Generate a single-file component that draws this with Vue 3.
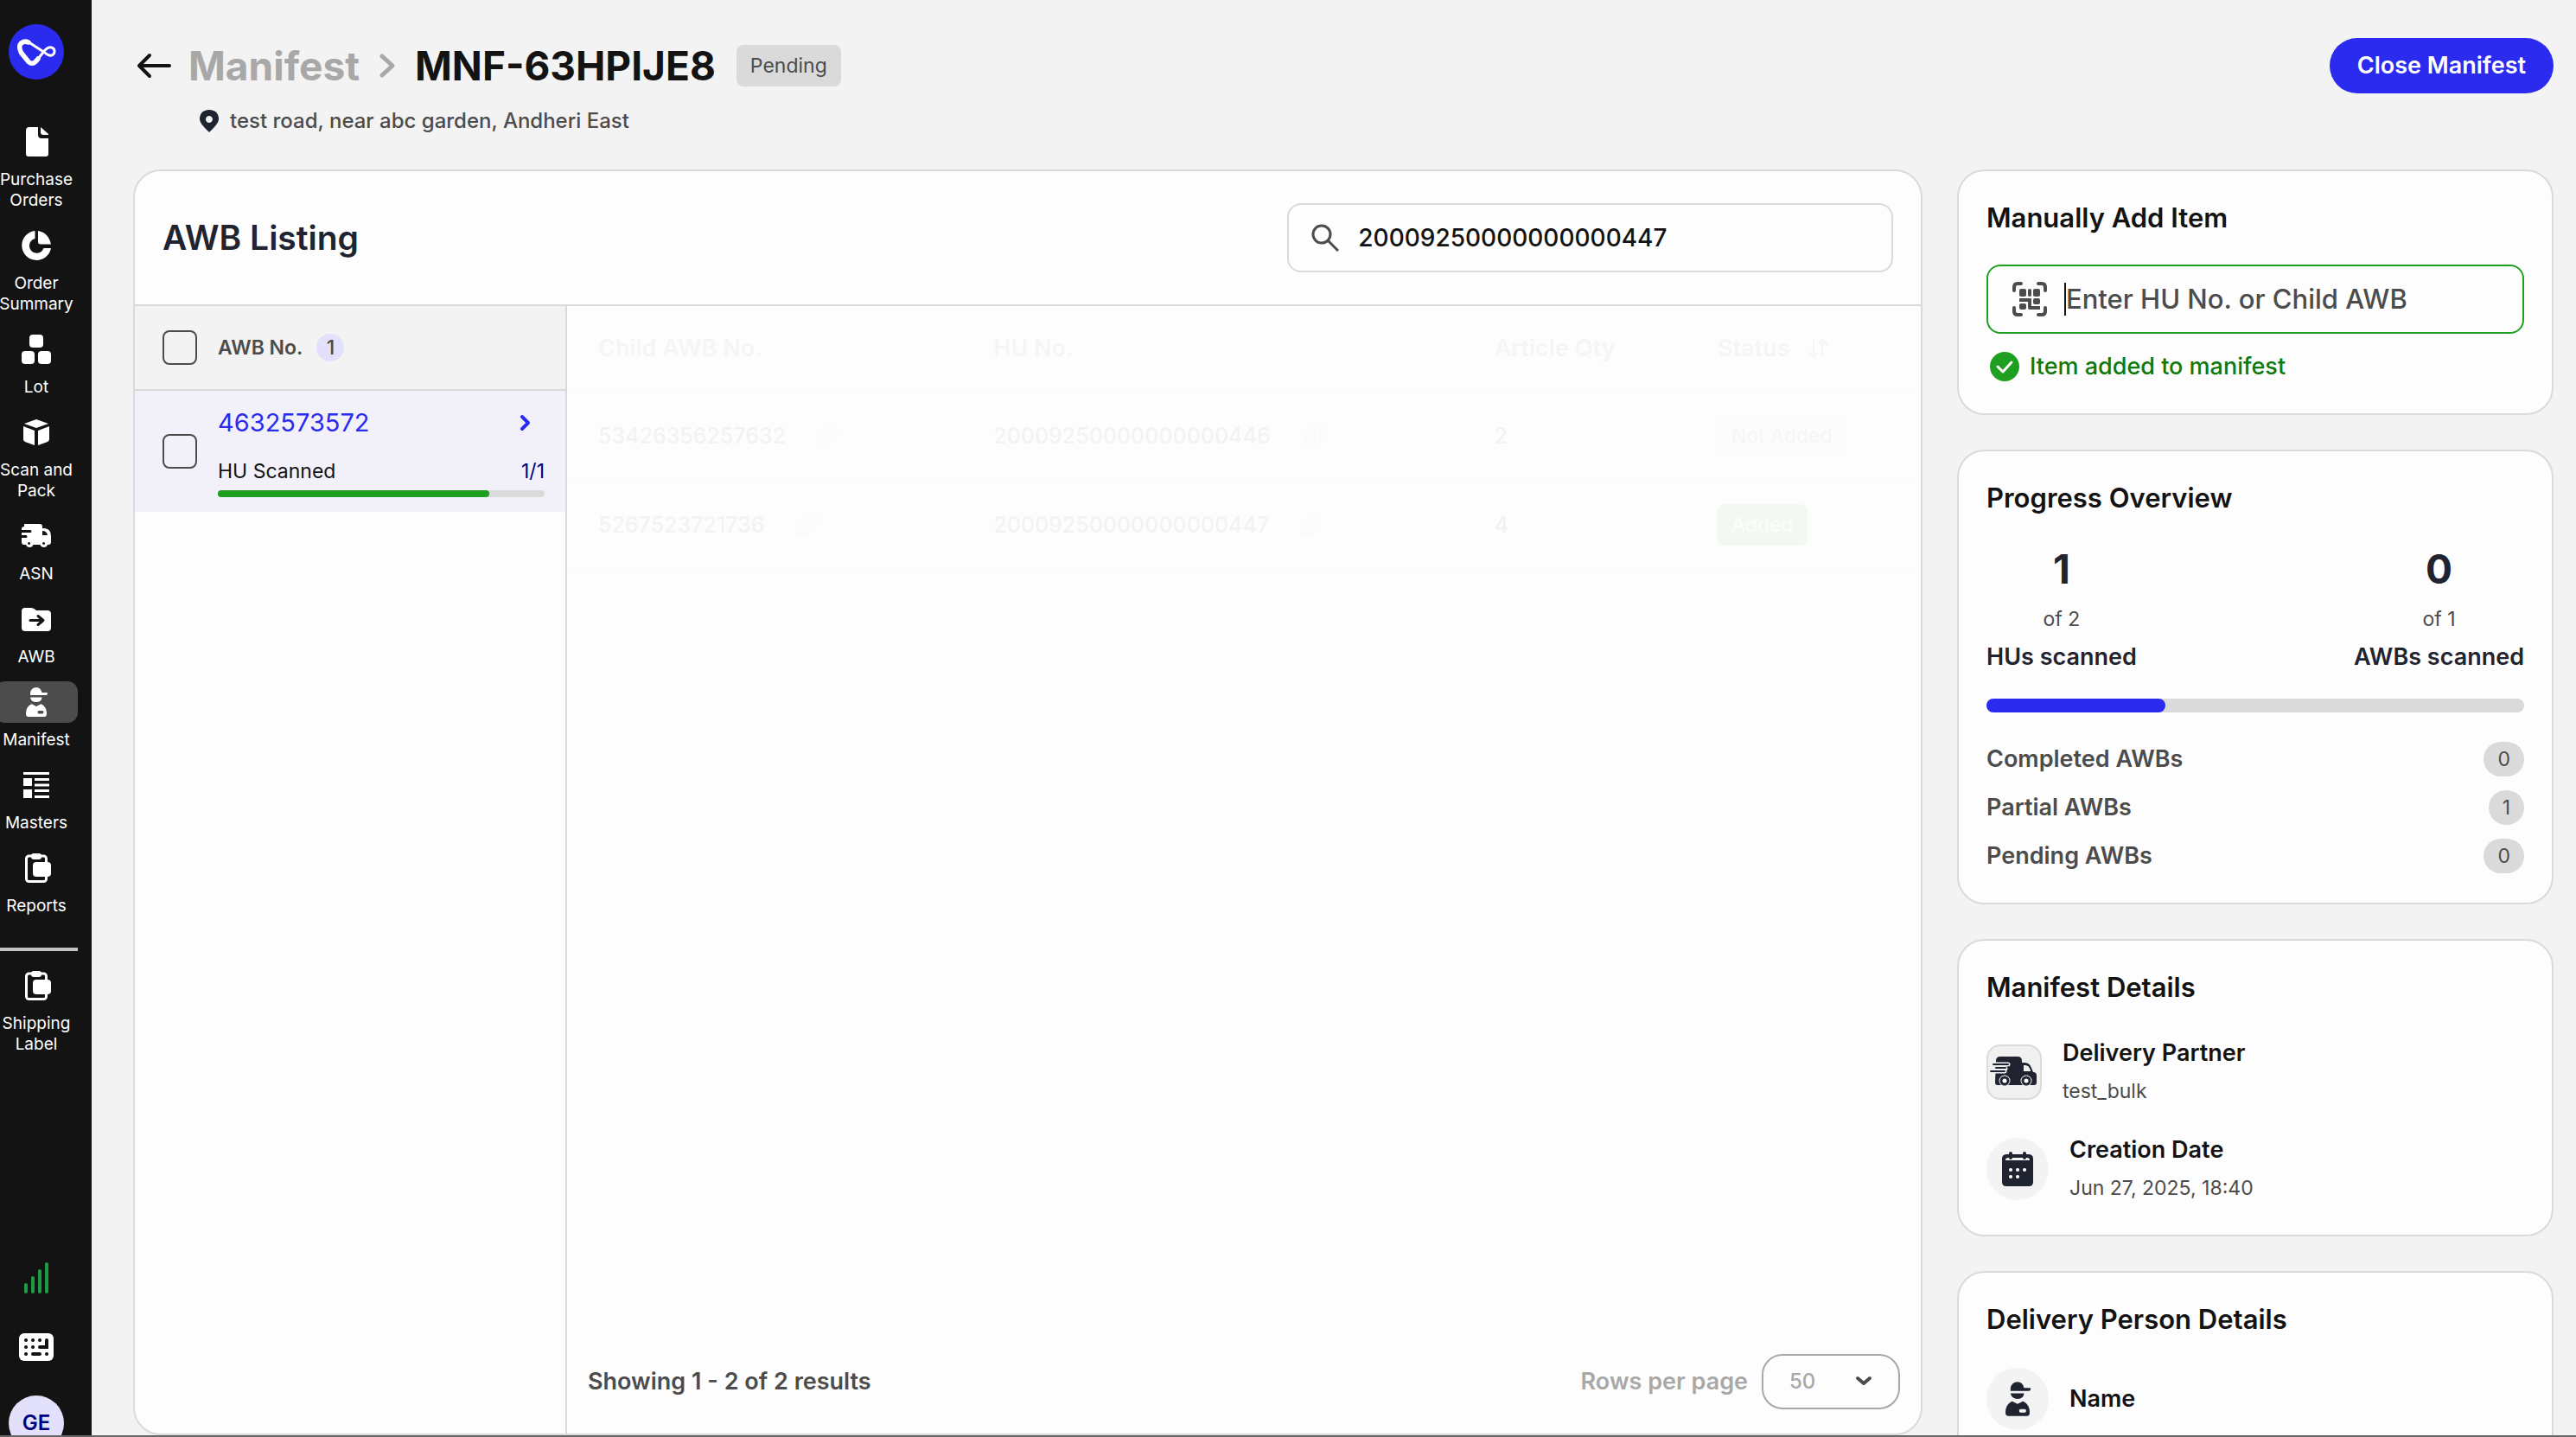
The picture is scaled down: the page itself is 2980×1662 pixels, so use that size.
<script setup>
import { ref } from 'vue'

const icons = {
  document:
    '<path d="M16 7h10v9q0 4 4 4h8v18q0 3-3 3H15q-3 0-3-3V11q0-4 4-4z"/><path d="M29 7l9 8v1h-6q-3 0-3-3z"/>',
  pie:
    '<path d="M22.500 7A17 17 0 1 0 41 27H32.500A8.500 8.500 0 1 1 22.500 16z"/><path d="M26 7Q38 9 41 22.500H29q-3 0-3-3z"/>',
  blocks:
    '<rect x="16" y="7" width="16" height="15" rx="4"/><rect x="7" y="26" width="15" height="15" rx="4"/><rect x="26" y="26" width="15" height="15" rx="4"/>',
  box:
    '<path d="M24 9l14 5-14 5-14-5z"/><path d="M9 17l13 5v17l-11-4q-2-1-2-3z"/><path d="M39 17l-13 5v17l11-4q2-1 2-3z"/>',
  truck:
    '<path fill-rule="evenodd" d="M10 10h18q3 0 3 3v2h3q7 1 7 9v7q0 3-3 3h-1a4.500 4.500 0 0 1-8.500 0h-8a4.500 4.500 0 0 1-8.500 0H10q-3 0-3-3v-5h5a1.500 1.500 0 0 0 0-3H7v-3h10a1.500 1.500 0 0 0 0-3H7v-1q0-3 3-3zM31 18v5h6q-1-5-6-5zM15.500 31a1.500 1.500 0 1 0 .1 0zM32.500 31a1.500 1.500 0 1 0 .1 0z"/>',
  folder:
    '<path fill-rule="evenodd" d="M11 11h7q3 0 6 3h13q4 0 4 4v16q0 4-4 4H11q-4 0-4-4V15q0-4 4-4z"/><path d="M17 25.500h14M26 20.500l6 5-6 5" fill="none" stroke="#131313" stroke-width="3" stroke-linecap="round" stroke-linejoin="round"/>',
  person:
    '<path d="M17 16V13.500Q18 7 24 7q5 0 6.500 6H36q1.500 0 1 1.500t-2 1.500z"/><path d="M17 18.500h13.500Q30 24 24 24t-7-5.500z"/><path fill-rule="evenodd" d="M18 26.500q1-.5 2 .5l4 2 4-2q1-1 2-.5 6 3 6 11 0 3.500-3 3.500H15q-3 0-3-3.500 0-8 6-11zM27 34q-1.500 0-1.500 1.800t1.500 1.700h4q1.500 0 1.500-1.700T31 34z"/>',
  list:
    '<path d="M9 9h30v3H9zM9 16h10v9H9zM9 29h10v10H9zM22 16h17v3H22zM22 22.500h17v3H22zM22 29h17v3H22zM22 36h17v3H22z"/>',
  wallet:
    '<rect x="12.500" y="10" width="23" height="29.500" rx="3" fill="none" stroke="currentColor" stroke-width="3"/><rect x="18" y="7" width="12" height="7" rx="3"/><rect x="20" y="17" width="21" height="17" rx="4"/>',
}

const navItems = [
  { label: 'Purchase Orders', icon: 'document' },
  { label: 'Order Summary', icon: 'pie' },
  { label: 'Lot', icon: 'blocks' },
  { label: 'Scan and Pack', icon: 'box' },
  { label: 'ASN', icon: 'truck' },
  { label: 'AWB', icon: 'folder' },
  { label: 'Manifest', icon: 'person', active: true },
  { label: 'Masters', icon: 'list' },
  { label: 'Reports', icon: 'wallet' },
]

const search = ref('20009250000000000447')
const itemCode = ref('')
const rowsPerPage = ref('50')

const rows = [
  { child: '53426356257632', hu: '20009250000000000446', qty: 2, status: 'Not Added' },
  { child: '5267523721736', hu: '20009250000000000447', qty: 4, status: 'Added' },
]

const scanned = { awb: 83, manifest: 33.3 }

const counts = [
  { label: 'Completed AWBs', value: 0 },
  { label: 'Partial AWBs', value: 1 },
  { label: 'Pending AWBs', value: 0 },
]
</script>

<template>
  <div class="app">
    <nav class="sidebar" aria-label="Main">
      <a href="#" class="logo" aria-label="Home">
        <svg viewBox="0 0 64 64" fill="none" stroke="#fff" stroke-linecap="round" stroke-linejoin="round">
          <path d="M34 40L31 43.500Q27 47 23 43.500L14.500 33Q10.500 25 15 21.500Q18.500 19 23 21" stroke-width="5.500" />
          <path d="M22 20L42 33Q48 38.500 52 34.500Q54.500 30 51 27.500Q46.500 25 42 30L34 40" stroke-width="3" />
        </svg>
      </a>
      <ul class="nav-list">
        <li v-for="item in navItems" :key="item.label">
          <a href="#" class="nav-item" :class="{ active: item.active }">
            <span class="nav-icon"><svg viewBox="0 0 48 48" fill="currentColor" v-html="icons[item.icon]"></svg></span>
            <span class="nav-label">{{ item.label }}</span>
          </a>
        </li>
      </ul>
      <hr class="nav-divider" />
      <a href="#" class="nav-item">
        <span class="nav-icon"><svg viewBox="0 0 48 48" fill="currentColor" v-html="icons.wallet"></svg></span>
        <span class="nav-label">Shipping Label</span>
      </a>
      <div class="nav-bottom">
        <svg class="signal" viewBox="0 0 30 36" fill="none" stroke="#1b9c43" stroke-width="4" stroke-linecap="round">
          <path d="M3 26v8M11 18v16M19 10v24M27 2v32" />
        </svg>
        <button class="plain" aria-label="Keyboard shortcuts">
          <svg class="keyboard" viewBox="0 0 40 32">
            <rect width="40" height="32" rx="6" fill="#fff" />
            <g stroke="#131313" stroke-width="4" stroke-linecap="round" fill="none">
              <path d="M8 8h.1M16 8h.1M24 8h.1M8 16h.1M16 16h.1M8 24h.1M32 24h.1M16 24h8M32 8v8h-8" />
            </g>
          </svg>
        </button>
        <button class="avatar">GE</button>
      </div>
    </nav>

    <div class="page">
      <header class="topbar">
        <div>
          <div class="crumbs">
            <a href="#" class="back" aria-label="Back">
              <svg viewBox="0 0 40 32" fill="none" stroke="#131313" stroke-width="4" stroke-linecap="round" stroke-linejoin="round">
                <path d="M38 16H3M15 4L3 16l12 12" />
              </svg>
            </a>
            <a href="#" class="crumb">Manifest</a>
            <svg class="crumb-sep" viewBox="0 0 20 28" fill="none" stroke="#a8a8a8" stroke-width="5" stroke-linecap="round" stroke-linejoin="round">
              <path d="M4 3l12 11L4 25" />
            </svg>
            <h1>MNF-63HPIJE8</h1>
            <span class="tag">Pending</span>
          </div>
          <p class="address">
            <svg viewBox="0 0 24 28" fill="#1f2430">
              <path fill-rule="evenodd" d="M12 1Q1 1.500 1 12q0 5 11 15 11-10 11-15Q23 1.500 12 1zM12 8a4 4 0 1 1-.1 0z" />
            </svg>
            test road, near abc garden, Andheri East
          </p>
        </div>
        <button class="primary">Close Manifest</button>
      </header>

      <div class="columns">
        <main class="panel">
          <div class="panel-head">
            <h2>AWB Listing</h2>
            <label class="search">
              <svg viewBox="0 0 32 32" fill="none" stroke="#4c4c4c" stroke-width="3">
                <circle cx="12" cy="12" r="10" />
                <path d="M19 19l12 12" />
              </svg>
              <input v-model="search" type="text" aria-label="Search AWB" />
            </label>
          </div>
          <div class="panel-body">
            <section class="awb-col">
              <div class="awb-head">
                <input id="all" type="checkbox" class="check" />
                <label for="all">AWB No.</label>
                <span class="count">1</span>
              </div>
              <div class="awb-row">
                <input type="checkbox" class="check" aria-label="Select 4632573572" />
                <div class="awb-info">
                  <div class="between">
                    <a href="#" class="awb-no">4632573572</a>
                    <svg class="awb-go" viewBox="0 0 16 20" fill="none" stroke="#2b2bef" stroke-width="4" stroke-linecap="round" stroke-linejoin="round">
                      <path d="M4 3l7 7-7 7" />
                    </svg>
                  </div>
                  <div class="between scanned">
                    <span>HU Scanned</span>
                    <span class="ratio">1/1</span>
                  </div>
                  <div class="bar thin"><div class="fill green" :style="{ width: scanned.awb + '%' }"></div></div>
                </div>
              </div>
            </section>

            <section class="hu-col">
              <table>
                <colgroup>
                  <col class="c-child" /><col class="c-hu" /><col class="c-qty" /><col />
                </colgroup>
                <thead>
                  <tr>
                    <th>Child AWB No.</th>
                    <th>HU No.</th>
                    <th>Article Qty</th>
                    <th>
                      <span class="cell">Status
                        <svg class="sort" viewBox="0 0 24 24" fill="none" stroke="currentColor" stroke-width="2">
                          <path d="M7 2v20M1 16l6 6 4-5M17 22V2M13 7l4-5 6 6" />
                        </svg>
                      </span>
                    </th>
                  </tr>
                </thead>
                <tbody>
                  <tr v-for="row in rows" :key="row.child">
                    <td><span class="cell">{{ row.child }}<svg class="copy" viewBox="0 0 32 32" fill="#9a9a9a"><path d="M4 10h16v20H4z" opacity=".4" /><path d="M10 2h20v20h-6V6H10z" opacity=".2" /></svg></span></td>
                    <td><span class="cell">{{ row.hu }}<svg class="copy" viewBox="0 0 32 32" fill="#9a9a9a"><path d="M4 10h16v20H4z" opacity=".4" /><path d="M10 2h20v20h-6V6H10z" opacity=".2" /></svg></span></td>
                    <td>{{ row.qty }}</td>
                    <td><span class="tag" :class="{ added: row.status === 'Added' }">{{ row.status }}</span></td>
                  </tr>
                </tbody>
              </table>
              <footer class="pager">
                <span>Showing 1 - 2 of 2 results</span>
                <div class="per-page">
                  <label for="rpp">Rows per page</label>
                  <div class="select">
                    <select id="rpp" v-model="rowsPerPage">
                      <option>50</option>
                      <option>100</option>
                    </select>
                    <svg viewBox="0 0 20 14" fill="none" stroke="#4c4c4c" stroke-width="4" stroke-linecap="round" stroke-linejoin="round">
                      <path d="M3 4l7 6 7-6" />
                    </svg>
                  </div>
                </div>
              </footer>
            </section>
          </div>
        </main>

        <aside class="cards">
          <section class="card">
            <h3>Manually Add Item</h3>
            <label class="scan">
              <svg viewBox="0 0 40 40" fill="none" stroke="#4c4c4c" stroke-width="4" stroke-linecap="round">
                <path d="M2 10V6q0-4 4-4h4M30 2h4q4 0 4 4v4M38 30v4q0 4-4 4h-4M10 38H6q-4 0-4-4v-4" />
                <g stroke="none" fill="#4c4c4c">
                  <rect x="8" y="8" width="8" height="9" rx="2" />
                  <rect x="18" y="8" width="4" height="9" rx="2" />
                  <rect x="24" y="8" width="8" height="9" rx="2" />
                  <path d="M8 19h14v9h10v4H20q-2 0-2-2v-7H8z" />
                  <rect x="8" y="25" width="8" height="7" rx="2" />
                  <rect x="24" y="19" width="8" height="7" rx="2" />
                </g>
              </svg>
              <span class="caret"></span>
              <input v-model="itemCode" type="text" placeholder="Enter HU No. or Child AWB" aria-label="HU No. or Child AWB" />
            </label>
            <p class="success">
              <svg viewBox="0 0 34 34">
                <circle cx="17" cy="17" r="17" fill="#1f9f1f" />
                <path d="M9 17l6 6 10-11" fill="none" stroke="#fff" stroke-width="3" stroke-linecap="round" stroke-linejoin="round" />
              </svg>
              Item added to manifest
            </p>
          </section>

          <section class="card">
            <h3>Progress Overview</h3>
            <div class="between stats">
              <div class="stat"><strong>1</strong><span>of 2</span><b>HUs scanned</b></div>
              <div class="stat"><strong>0</strong><span>of 1</span><b>AWBs scanned</b></div>
            </div>
            <div class="bar"><div class="fill" :style="{ width: scanned.manifest + '%' }"></div></div>
            <ul class="counts">
              <li v-for="c in counts" :key="c.label" class="between">
                {{ c.label }}<span class="pill">{{ c.value }}</span>
              </li>
            </ul>
          </section>

          <section class="card">
            <h3>Manifest Details</h3>
            <div class="detail">
              <svg class="square" viewBox="0 0 64 64">
                <rect x="1" y="1" width="62" height="62" rx="15" fill="#f0f0f0" stroke="#dadada" stroke-width="2" />
                <path d="M11 19q0-5 5-5h20q5 0 5 5v2h3q6 0 8 6l2 5q4 0 4 4v8q0 3-3 3H13q-3 0-3-3z" fill="#1f2430" />
                <path d="M43 24h2q4 0 6 6v1h-8z" fill="#f0f0f0" />
                <path d="M8 23h17M12 28h10M5 31h16" stroke="#f0f0f0" stroke-width="5" stroke-linecap="round" />
                <path d="M8 23h17M11 27h11M5 31h16" stroke="#1f2430" stroke-width="2" stroke-linecap="round" />
                <g fill="#fff" stroke="#f0f0f0" stroke-width="7"><circle cx="21" cy="42" r="3" /><circle cx="46" cy="42" r="3" /></g>
                <g fill="#fff" stroke="#1f2430" stroke-width="3"><circle cx="21" cy="42" r="4" /><circle cx="46" cy="42" r="4" /></g>
              </svg>
              <div><h4>Delivery Partner</h4><p>test_bulk</p></div>
            </div>
            <div class="detail">
              <span class="round">
                <svg viewBox="0 0 36 40">
                  <path d="M6 3h24q6 0 6 5v27q0 5-5 5H5q-5 0-5-5V8q0-5 6-5z" fill="#1f2430" />
                  <path d="M4 10q0-3 3-3h22q3 0 3 3z" fill="#f3f3f3" />
                  <path d="M10 2v5M26 2v5" stroke="#1f2430" stroke-width="4" stroke-linecap="round" />
                  <path d="M10 21h.1M18 21h.1M26 21h.1M10 29h.1M18 29h.1" stroke="#fff" stroke-width="4" stroke-linecap="round" />
                </svg>
              </span>
              <div><h4>Creation Date</h4><p>Jun 27, 2025, 18:40</p></div>
            </div>
          </section>

          <section class="card">
            <h3>Delivery Person Details</h3>
            <div class="detail">
              <span class="round"><svg class="man" viewBox="0 0 48 48" fill="#1f2430" v-html="icons.person"></svg></span>
              <h4>Name</h4>
            </div>
          </section>
        </aside>
      </div>
    </div>
  </div>
</template>

<style>
body {
  margin: 0;
  background: #f3f3f3;
}
</style>

<style scoped>
* {
  box-sizing: border-box;
}
.app {
  display: grid;
  grid-template-columns: 106px 1fr;
  height: 100vh;
  overflow: hidden;
  border-bottom: 2px solid #666;
  font-family: Inter, "Liberation Sans", sans-serif;
  font-size: 24px;
  line-height: 32px;
  color: #131313;
  background: #f3f3f3;
}
h1, h2, h3, h4, p, ul {
  margin: 0;
  padding: 0;
  list-style: none;
}
a {
  text-decoration: none;
}
button, input, select {
  font: inherit;
  color: inherit;
  border: 0;
  padding: 0;
  background: none;
}
svg {
  display: block;
  flex: none;
}
.between {
  display: flex;
  justify-content: space-between;
  align-items: center;
}

.sidebar {
  display: flex;
  flex-direction: column;
  align-items: flex-end;
  min-height: 0;
  overflow: hidden;
  padding: 28px 16px 0 0;
  background: #131313;
  color: #fff;
}
.logo {
  width: 64px;
  height: 64px;
  margin: 0 16px 48px;
  border-radius: 50%;
  background: #2b2bef;
}
.nav-list {
  display: flex;
  flex-direction: column;
  gap: 16px;
}
.nav-item {
  display: flex;
  flex-direction: column;
  align-items: center;
  gap: 8px;
  width: 96px;
  color: #fff;
}
.nav-icon {
  display: flex;
  justify-content: center;
  width: 96px;
  border-radius: 12px;
}
.nav-icon svg {
  width: 48px;
  height: 48px;
}
.active .nav-icon {
  background: #4c4c4c;
}
.nav-label {
  font-size: 19px;
  line-height: 24px;
  text-align: center;
}
.nav-divider {
  width: 96px;
  height: 4px;
  margin: 36px 0 16px;
  border: 0;
  background: #c4c4c4;
}
.nav-bottom {
  display: flex;
  flex-direction: column;
  align-items: center;
  width: 96px;
  margin: auto 0 -18px;
}
.signal {
  width: 30px;
  height: 36px;
  margin-bottom: 46px;
}
.keyboard {
  width: 40px;
  height: 32px;
  margin-bottom: 40px;
}
.avatar {
  width: 64px;
  height: 64px;
  border-radius: 50%;
  background: #e2e0fa;
  color: #00007d;
  font-weight: 600;
}

.page {
  display: flex;
  flex-direction: column;
  min-width: 0;
  min-height: 0;
  padding: 0 26px 0 48px;
}
.topbar {
  display: flex;
  justify-content: space-between;
  align-items: flex-start;
  height: 196px;
  padding-top: 44px;
  flex: none;
}
.crumbs {
  display: flex;
  align-items: center;
  height: 64px;
}
.back svg {
  width: 40px;
  height: 32px;
  margin: 0 20px 0 4px;
}
.crumb, h1 {
  font-size: 46px;
  line-height: 64px;
  font-weight: 700;
}
.crumb {
  color: #a8a8a8;
}
.crumb-sep {
  width: 20px;
  height: 28px;
  margin: 0 22px;
}
.tag {
  display: inline-block;
  height: 48px;
  padding: 0 16px;
  border-radius: 8px;
  background: #dadada;
  color: #4c4c4c;
  font-size: 23px;
  font-weight: 400;
  line-height: 48px;
}
h1 + .tag {
  margin-left: 24px;
}
.address {
  display: flex;
  align-items: center;
  gap: 12px;
  margin: 16px 0 0 76px;
  color: #4c4c4c;
  font-size: 24px;
  font-weight: 500;
}
.address svg {
  width: 24px;
  height: 28px;
}
.primary {
  height: 64px;
  padding: 0 32px;
  border-radius: 32px;
  background: #2b2bef;
  color: #fff;
  font-size: 27px;
  font-weight: 600;
}

.columns {
  display: grid;
  grid-template-columns: 3fr 1fr;
  gap: 40px;
  flex: 1;
  min-height: 0;
}
.panel, .card {
  border: 2px solid #dadada;
  border-radius: 32px;
  background: #fdfdfd;
}
.panel {
  display: flex;
  flex-direction: column;
  min-height: 0;
  overflow: hidden;
}
.panel-head {
  display: flex;
  justify-content: space-between;
  align-items: center;
  height: 156px;
  padding: 0 32px;
  border-bottom: 2px solid #dadada;
}
h2 {
  font-size: 39px;
  line-height: 48px;
  font-weight: 600;
  color: #1f2430;
}
.search, .scan {
  display: flex;
  align-items: center;
  height: 80px;
  border: 2px solid #dadada;
  border-radius: 16px;
}
.search {
  width: 35%;
  padding: 0 26px;
  gap: 22px;
}
.search svg {
  width: 32px;
  height: 32px;
}
.search input, .scan input {
  flex: 1;
  min-width: 0;
  outline: 0;
  font-size: 28px;
  font-weight: 500;
}
.panel-body {
  display: flex;
  flex: 1;
  min-height: 0;
}
.awb-col {
  width: 500px;
  border-right: 2px solid #dadada;
}
.awb-head, .awb-row {
  display: flex;
  align-items: center;
  padding: 0 24px 0 32px;
}
.awb-head {
  height: 98px;
  border-bottom: 2px solid #dadada;
  background: #f3f3f3;
  color: #4c4c4c;
  font-size: 23px;
  font-weight: 600;
}
.check {
  appearance: none;
  flex: none;
  width: 40px;
  height: 40px;
  margin: 0 24px 0 0;
  border: 2px solid #4c4c4c;
  border-radius: 8px;
}
.count {
  width: 32px;
  height: 32px;
  margin-left: 16px;
  border-radius: 50%;
  background: #e2e0fa;
  font-weight: 500;
  text-align: center;
}
.awb-row {
  height: 140px;
  background: #f2f1f9;
}
.awb-info {
  flex: 1;
}
.awb-no {
  color: #2b2bef;
  font-size: 29px;
  line-height: 40px;
}
.awb-go {
  width: 16px;
  height: 20px;
  margin-right: 14px;
}
.scanned {
  margin: 20px 0 6px;
  font-size: 23px;
}
.ratio {
  color: #00007d;
}
.bar {
  height: 16px;
  border-radius: 8px;
  background: #dadada;
}
.bar.thin {
  height: 8px;
}
.fill {
  height: 100%;
  border-radius: 8px;
  background: #2b2bef;
}
.fill.green {
  background: #1f9f1f;
}

.hu-col {
  display: flex;
  flex-direction: column;
  justify-content: space-between;
  flex: 1;
}
table {
  width: 100%;
  table-layout: fixed;
  border-collapse: collapse;
  opacity: 0.04;
}
.c-child {
  width: 29.2%;
}
.c-hu {
  width: 37%;
}
.c-qty {
  width: 16.5%;
}
th, td {
  height: 103px;
  padding: 0 0 0 36px;
  border-bottom: 2px solid #dadada;
  font-size: 25px;
  font-weight: 500;
  text-align: left;
}
th {
  height: 98px;
  color: #4c4c4c;
  font-size: 27px;
  font-weight: 600;
}
.cell {
  display: flex;
  align-items: center;
}
.copy {
  width: 32px;
  height: 32px;
  margin-left: 32px;
}
.sort {
  width: 24px;
  height: 24px;
  margin-left: 20px;
}
td .tag {
  background: #efefef;
}
td .tag.added {
  background: #1f9f1f;
  color: #fff;
}
.pager {
  display: flex;
  justify-content: space-between;
  align-items: center;
  padding: 0 24px 28px;
  color: #4c4c4c;
  font-size: 27px;
  font-weight: 600;
}
.per-page {
  display: flex;
  align-items: center;
  gap: 16px;
  color: #a8a8a8;
}
.select {
  position: relative;
}
.select select {
  appearance: none;
  width: 160px;
  height: 64px;
  padding: 0 64px 0 30px;
  border: 2px solid #a8a8a8;
  border-radius: 24px;
  font-size: 24px;
  font-weight: 500;
}
.select svg {
  position: absolute;
  top: 24px;
  right: 32px;
  width: 20px;
  height: 14px;
  pointer-events: none;
}

.cards {
  display: flex;
  flex-direction: column;
  gap: 40px;
  min-height: 0;
}
.card {
  flex: none;
  padding: 30px 32px 34px;
}
h3 {
  font-size: 31px;
  line-height: 48px;
  font-weight: 600;
}
.scan {
  margin: 30px 0 18px;
  padding: 0 28px;
  border-color: #1f9f1f;
}
.scan svg {
  width: 40px;
  height: 40px;
  margin-right: 20px;
}
.caret {
  width: 2px;
  height: 38px;
  background: #131313;
}
.scan input {
  caret-color: transparent;
  font-size: 31px;
}
.scan input::placeholder {
  color: #4c4c4c;
  opacity: 1;
}
.success {
  display: flex;
  align-items: center;
  gap: 12px;
  padding-left: 4px;
  color: #0c7a0c;
  font-size: 27px;
  font-weight: 500;
  line-height: 40px;
}
.success svg {
  width: 34px;
  height: 34px;
}
.stats {
  margin: 28px 0 32px;
}
.stat {
  display: flex;
  flex-direction: column;
  align-items: center;
  color: #1f2430;
}
.stat strong {
  font-size: 46px;
  line-height: 60px;
}
.stat span {
  margin-top: 12px;
  color: #4c4c4c;
  font-size: 23px;
}
.stat b {
  margin-top: 12px;
  font-size: 27px;
  font-weight: 600;
}
.counts {
  display: flex;
  flex-direction: column;
  gap: 16px;
  margin-top: 34px;
}
.counts li {
  color: #4c4c4c;
  font-size: 27px;
  font-weight: 600;
}
.pill {
  height: 40px;
  padding: 0 16px;
  border-radius: 20px;
  background: #dadada;
  font-size: 23px;
  font-weight: 400;
  line-height: 40px;
}
.detail {
  display: flex;
  align-items: center;
  gap: 24px;
  margin-top: 32px;
}
.detail + .detail {
  margin-top: 28px;
}
.square {
  width: 64px;
  height: 64px;
}
.round {
  display: flex;
  align-items: center;
  justify-content: center;
  width: 72px;
  height: 72px;
  border-radius: 50%;
  background: #f3f3f3;
}
.round svg {
  width: 36px;
  height: 40px;
}
.round .man {
  width: 56px;
  height: 56px;
}
h4 {
  font-size: 27px;
  font-weight: 600;
  line-height: 40px;
}
.detail p {
  margin-top: 4px;
  color: #4c4c4c;
  font-size: 23px;
  line-height: 40px;
}
</style>
